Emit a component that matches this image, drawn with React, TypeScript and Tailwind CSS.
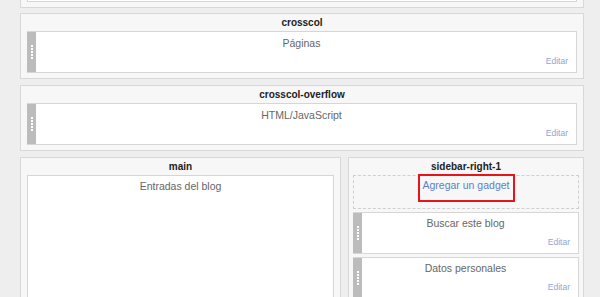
import React from "react";

const font = { fontFamily: '"Liberation Sans", Arial, sans-serif' };

function Handle() {
  return (
    <div className="w-[9px] shrink-0 bg-[#bcbcbc] flex flex-col items-center justify-center gap-[1px]">
      <div className="w-[2px] h-[2px] bg-white" />
      <div className="w-[2px] h-[2px] bg-white" />
      <div className="w-[2px] h-[2px] bg-white" />
      <div className="w-[2px] h-[2px] bg-white" />
      <div className="w-[2px] h-[2px] bg-white" />
    </div>
  );
}

function Widget({ name, pt = "pt-[5px]" }: { name: string; pt?: string }) {
  return (
    <div className="h-[42px] shrink-0 flex border border-[#d6d6d6] border-l-0 bg-white">
      <Handle />
      <div className="flex-1 flex flex-col">
        <div className={`text-center text-[10.5px] leading-[12px] text-[#666] ${pt} -ml-[9px]`}>{name}</div>
        <div className="mt-auto text-right text-[8.5px] leading-[10px] text-[#8ea6d6] pr-[8px] pb-[6px]">Editar</div>
      </div>
    </div>
  );
}

function Title({ t }: { t: string }) {
  return (
    <div className="h-[17px] shrink-0 flex items-center justify-center text-[10px] font-bold text-[#222]">{t}</div>
  );
}

export default function App() {
  return (
    <div style={font} className="w-[600px] h-[297px] overflow-hidden bg-[#eeeeee] pl-[20px] pr-[16px]">
      <div className="h-[8px] border-x border-b border-[#d8d8d8] bg-[#f7f7f7] px-[6px]">
        <div className="h-[2px] border-x border-b border-[#d6d6d6] bg-white" />
      </div>

      <div className="mt-[5px] border border-[#d8d8d8] bg-[#f7f7f7] px-[6px] pb-[5px]">
        <Title t="crosscol" />
        <Widget name="Páginas" />
      </div>

      <div className="mt-[6px] border border-[#d8d8d8] bg-[#f7f7f7] px-[6px] pb-[5px]">
        <Title t="crosscol-overflow" />
        <Widget name="HTML/JavaScript" />
      </div>

      <div className="mt-[6px] flex gap-[7px] items-start">
        <div className="w-[321px] h-[160px] border border-[#d8d8d8] bg-[#f7f7f7] px-[6px]">
          <Title t="main" />
          <div className="h-[150px] border border-[#d6d6d6] bg-white">
            <div className="text-center text-[10.5px] leading-[12px] text-[#666] pt-[4px]">Entradas del blog</div>
          </div>
        </div>

        <div className="w-[236px] h-[160px] border border-[#d8d8d8] bg-[#f7f7f7] px-[4px] flex flex-col gap-[3px]">
          <Title t="sidebar-right-1" />
          <div className="relative -mt-[3px] h-[34px] shrink-0 border border-dashed border-[#cfcfcf]">
            <div className="text-center text-[10.5px] leading-[12px] text-[#5b7fc8] pt-[3px]">Agregar un gadget</div>
            <div className="absolute left-[64px] -top-[2px] w-[97px] h-[28px] border-2 border-[#e8131b]" />
          </div>
          <Widget name="Buscar este blog" pt="pt-[4px]" />
          <Widget name="Datos personales" pt="pt-[4px]" />
        </div>
      </div>
    </div>
  );
}
